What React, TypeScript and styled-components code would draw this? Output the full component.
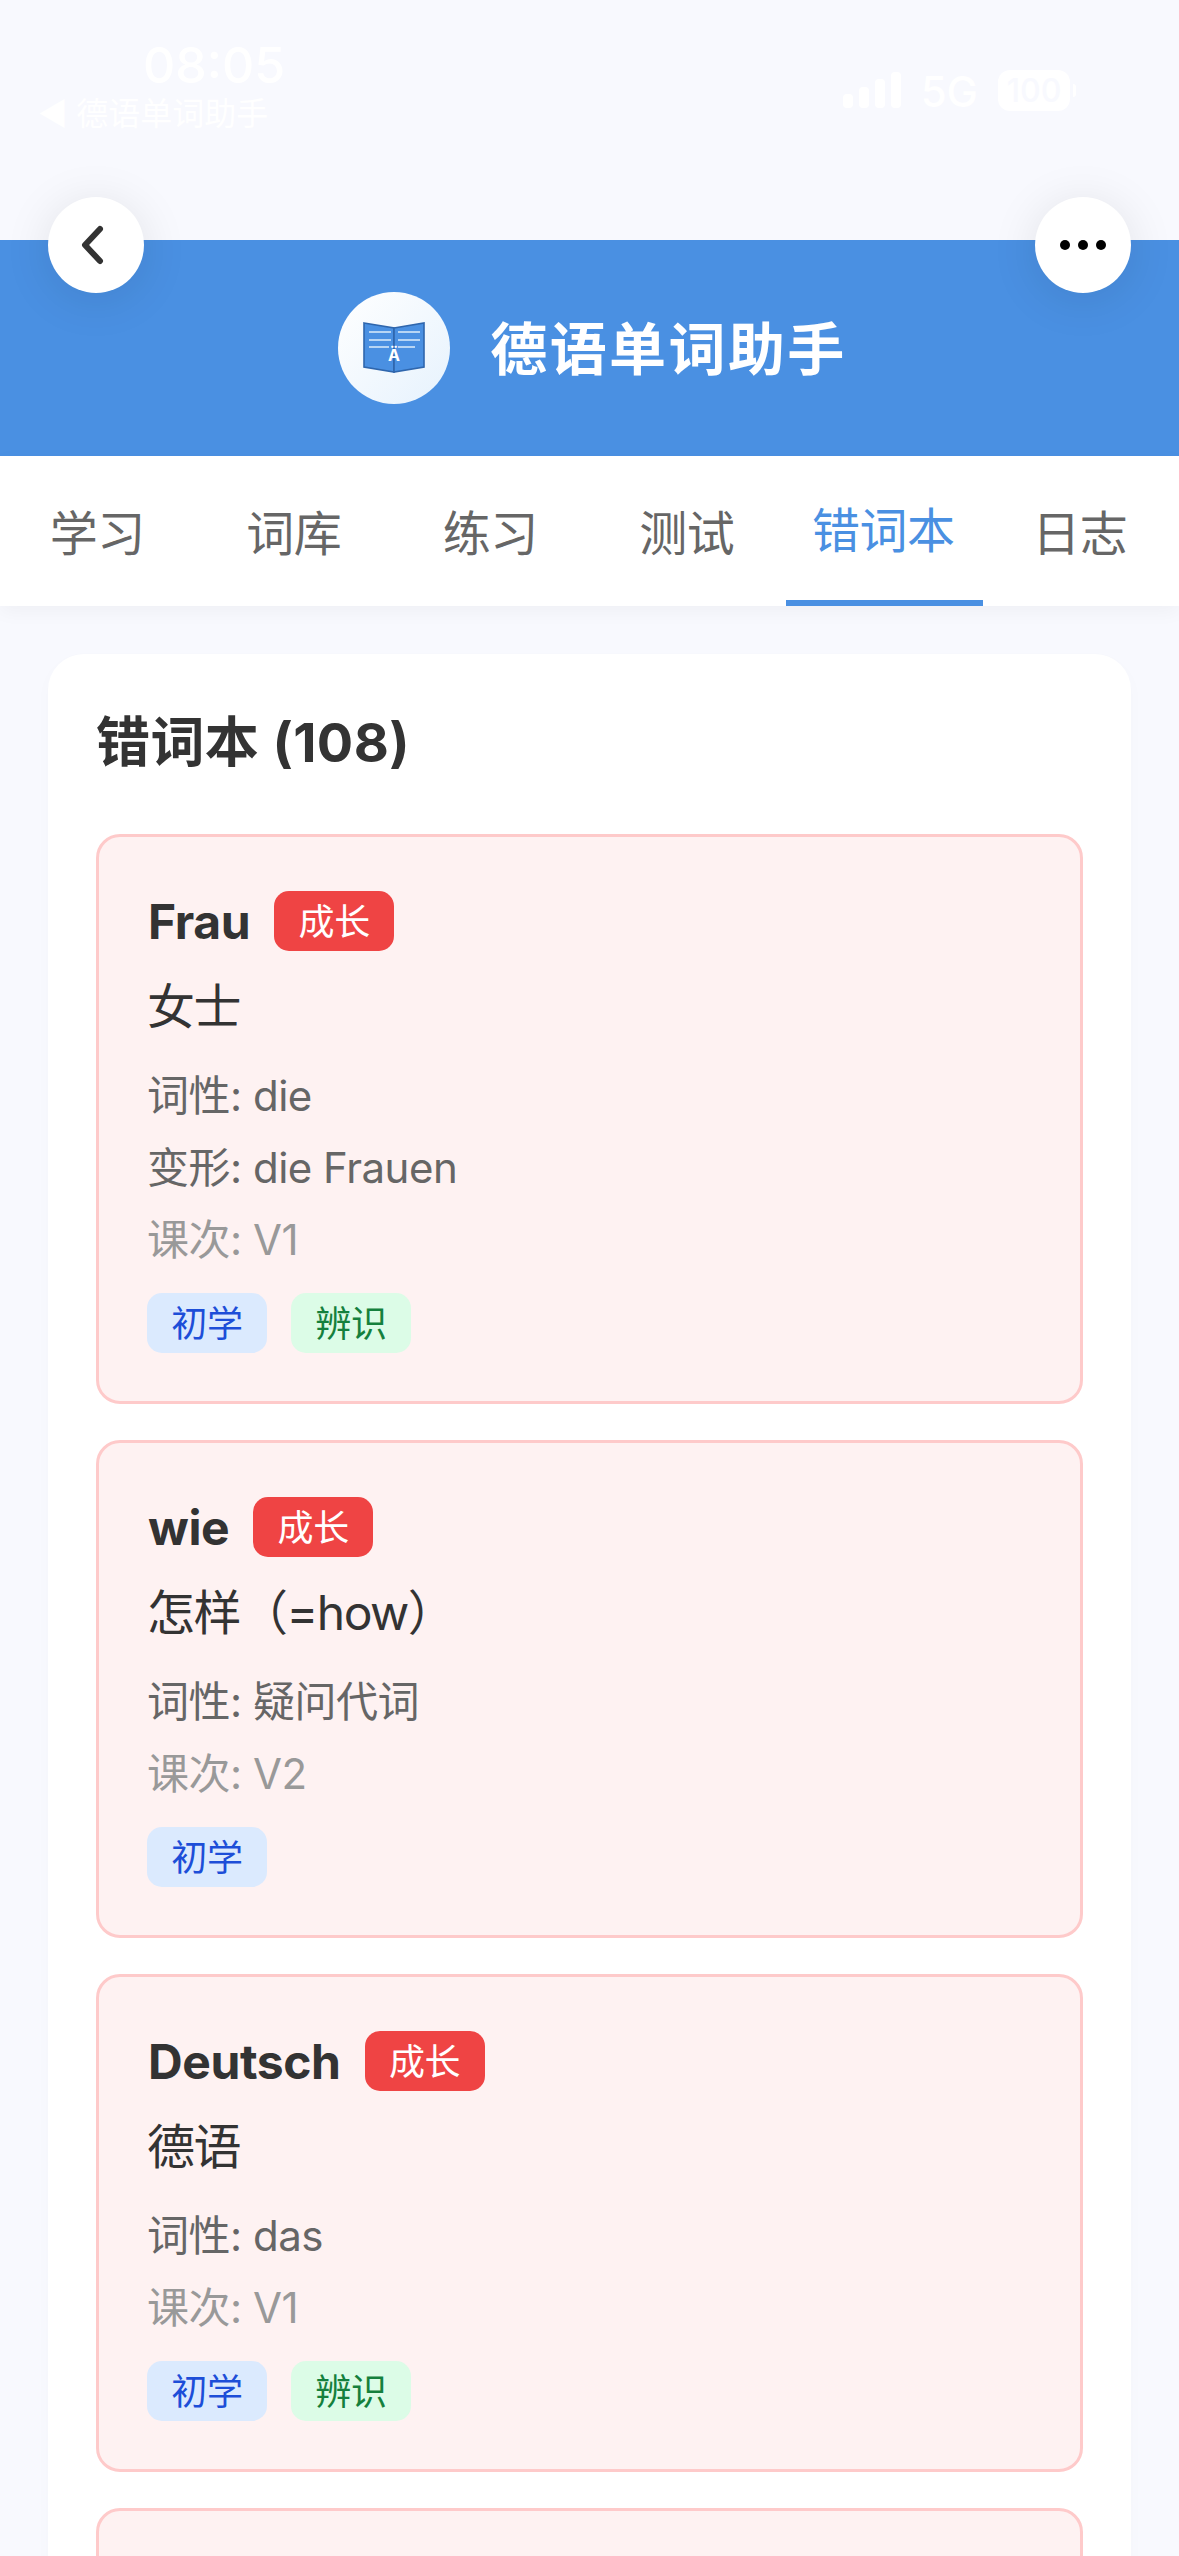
import styled, { createGlobalStyle } from "styled-components";

const GlobalStyle = createGlobalStyle`
  * {
    box-sizing: border-box;
  }
  html,
  body {
    margin: 0;
    height: 2556px;
    overflow: hidden;
    background: #f8f9fe;
  }
  body {
    font-family: Inter, "Noto Sans CJK SC", sans-serif;
  }
`;

type Word = {
  word: string;
  meaning: string;
  pos: string;
  forms?: string;
  lesson: string;
  tags: string[];
};

const WORDS: Word[] = [
  { word: "Frau", meaning: "女士", pos: "die", forms: "die Frauen", lesson: "V1", tags: ["初学", "辨识"] },
  { word: "wie", meaning: "怎样（=how）", pos: "疑问代词", lesson: "V2", tags: ["初学"] },
  { word: "Deutsch", meaning: "德语", pos: "das", lesson: "V1", tags: ["初学", "辨识"] },
];

const TABS = ["学习", "词库", "练习", "测试", "错词本", "日志"];

const Page = styled.div`
  width: 1179px;
  height: 2556px;
  overflow: hidden;
  position: relative;
`;

const StatusBar = styled.div`
  height: 240px;
  padding: 36px 48px 0 38px;
  display: flex;
  justify-content: space-between;
  align-items: flex-start;
  color: #fff;
`;

const StatusLeft = styled.div`
  display: flex;
  flex-direction: column;
`;

const Time = styled.div`
  font-size: 50px;
  line-height: 58px;
  font-weight: 500;
  margin-left: 105px;
`;

const BackApp = styled.div`
  font-size: 32px;
  line-height: 40px;
`;

const StatusRight = styled.div`
  display: flex;
  align-items: center;
  gap: 20px;
  margin-top: 30px;
  margin-right: 61px;
  font-size: 42px;
  line-height: 44px;
  font-weight: 500;
`;

const NetworkLabel = styled.span`
  margin-top: 4px;
`;

const Battery = styled.span`
  width: 72px;
  height: 41px;
  border-radius: 12px;
  background: #fff;
  color: #f8f9fe;
  font-size: 32px;
  line-height: 41px;
  text-align: center;
  position: relative;

  &::after {
    content: "";
    position: absolute;
    left: 75px;
    top: 14px;
    width: 3px;
    height: 13px;
    border-radius: 0 3px 3px 0;
    background: #fff;
  }
`;

const Header = styled.header`
  height: 216px;
  padding-left: 6px;
  background: #4a90e2;
  display: flex;
  align-items: center;
  justify-content: center;
  gap: 40px;
`;

const Logo = styled.div`
  width: 112px;
  height: 112px;
  border-radius: 50%;
  background: linear-gradient(135deg, #ffffff, #e6f2fd);
  display: flex;
  align-items: center;
  justify-content: center;
`;

const Title = styled.h1`
  margin: 3px 0 0;
  color: #fff;
  font-size: 57px;
  line-height: 80px;
  font-weight: 700;
  letter-spacing: 2.4px;
`;

const RoundButton = styled.button<{ $side: "left" | "right" }>`
  position: absolute;
  top: 197px;
  ${(p) => p.$side}: 48px;
  width: 96px;
  height: 96px;
  padding: 0;
  border: 0;
  border-radius: 50%;
  background: #fff;
  box-shadow: 0 6px 48px rgba(0, 0, 0, 0.1);
  display: flex;
  align-items: center;
  justify-content: center;
`;

const TabBar = styled.nav`
  height: 150px;
  background: #fff;
  display: flex;
  box-shadow: 0 6px 18px rgba(0, 0, 0, 0.04);
  position: relative;
`;

const Tab = styled.div<{ $active?: boolean }>`
  flex: 1;
  display: flex;
  align-items: center;
  justify-content: center;
  padding: 0 2px 3px 0;
  font-size: 48px;
  letter-spacing: -0.5px;
  color: ${(p) => (p.$active ? "#4a90e2" : "#666")};
  border-bottom: ${(p) => (p.$active ? "6px solid #4a90e2" : "0")};
`;

const Main = styled.main`
  padding: 48px 48px 0;
`;

const Panel = styled.section`
  background: #fff;
  border-radius: 36px;
  padding: 48px;
  box-shadow: 0 6px 18px rgba(0, 0, 0, 0.02);
`;

const PanelTitle = styled.h2`
  margin: 0 0 51px;
  font-size: 54px;
  line-height: 81px;
  font-weight: 700;
  letter-spacing: 0.4px;
  color: #333;
`;

const CardList = styled.div`
  display: flex;
  flex-direction: column;
  gap: 36px;
`;

const Card = styled.article`
  min-height: 300px;
  padding: 48px;
  border: 3px solid #fecaca;
  border-radius: 24px;
  background: #fef2f2;
`;

const WordRow = styled.div`
  display: flex;
  align-items: center;
  gap: 24px;
  height: 72px;
  margin-bottom: 14px;
`;

const WordText = styled.span`
  font-size: 48px;
  font-weight: 700;
  letter-spacing: -0.4px;
  margin-left: 1px;
  color: #333;
`;

const Pill = styled.span<{ $bg: string; $fg: string }>`
  width: 120px;
  height: 60px;
  padding-bottom: 4px;
  border-radius: 15px;
  display: flex;
  align-items: center;
  justify-content: center;
  font-size: 36px;
  letter-spacing: -0.3px;
  background: ${(p) => p.$bg};
  color: ${(p) => p.$fg};
`;

const Meaning = styled.div`
  font-size: 48px;
  line-height: 72px;
  letter-spacing: -1.5px;
  color: #333;
  margin-bottom: 21px;
`;

const Detail = styled.div<{ $muted?: boolean }>`
  font-size: 42px;
  line-height: 63px;
  letter-spacing: -0.5px;
  margin-bottom: 9px;
  color: ${(p) => (p.$muted ? "#999" : "#666")};
`;

const Tags = styled.div`
  display: flex;
  gap: 24px;
  margin-top: 22px;
`;

const tagColors: Record<string, { bg: string; fg: string }> = {
  初学: { bg: "#dbeafe", fg: "#1d4ed8" },
  辨识: { bg: "#dcfce7", fg: "#15803d" },
};

const BookIcon = () => (
  <svg width="62" height="52" viewBox="0 0 62 52">
    <path d="M1 1 L31 6 L31 50 L1 45 Z" fill="#4a90e2" stroke="#2f66ad" strokeWidth="1.6" />
    <path d="M31 6 L61 1 L61 45 L31 50 Z" fill="#4a90e2" stroke="#2f66ad" strokeWidth="1.6" />
    <g stroke="#dcebfa" strokeWidth="1.6">
      <path d="M6 10 H28 M6 18 H28 M6 25 H26" />
      <path d="M35 10 H57 M35 18 H57 M35 25 H52" />
    </g>
    <text x="31" y="39" textAnchor="middle" fontSize="16" fontWeight="700" fill="#fff" fontFamily="Inter, sans-serif">
      Ä
    </text>
  </svg>
);

const SignalIcon = () => (
  <svg width="58" height="36" viewBox="0 0 58 36" fill="#fff">
    <rect x="0" y="22" width="10" height="14" rx="4" />
    <rect x="16" y="15" width="10" height="21" rx="4" />
    <rect x="32" y="7" width="10" height="29" rx="4" />
    <rect x="48" y="0" width="10" height="36" rx="4" />
  </svg>
);

const BackIcon = () => (
  <svg width="30" height="42" viewBox="0 0 30 42" fill="none">
    <path d="M19 5 L4 21 L19 37" stroke="#333" strokeWidth="6" strokeLinecap="round" strokeLinejoin="round" />
  </svg>
);

const MoreIcon = () => (
  <svg width="46" height="10" viewBox="0 0 46 10" fill="#000">
    <circle cx="5" cy="5" r="5" />
    <circle cx="23" cy="5" r="5" />
    <circle cx="41" cy="5" r="5" />
  </svg>
);

const App = () => {
  return (
    <Page>
      <GlobalStyle />
      <StatusBar>
        <StatusLeft>
          <Time>08:05</Time>
          <BackApp>◀ 德语单词助手</BackApp>
        </StatusLeft>
        <StatusRight>
          <SignalIcon />
          <NetworkLabel>5G</NetworkLabel>
          <Battery>100</Battery>
        </StatusRight>
      </StatusBar>
      <Header>
        <Logo>
          <BookIcon />
        </Logo>
        <Title>德语单词助手</Title>
      </Header>
      <RoundButton $side="left" aria-label="back">
        <BackIcon />
      </RoundButton>
      <RoundButton $side="right" aria-label="more">
        <MoreIcon />
      </RoundButton>
      <TabBar>
        {TABS.map((t) => (
          <Tab key={t} $active={t === "错词本"}>
            {t}
          </Tab>
        ))}
      </TabBar>
      <Main>
        <Panel>
          <PanelTitle>错词本 (108)</PanelTitle>
          <CardList>
            {WORDS.map((w) => (
              <Card key={w.word}>
                <WordRow>
                  <WordText>{w.word}</WordText>
                  <Pill $bg="#ef4444" $fg="#fff">
                    成长
                  </Pill>
                </WordRow>
                <Meaning>{w.meaning}</Meaning>
                <Detail>词性: {w.pos}</Detail>
                {w.forms && <Detail>变形: {w.forms}</Detail>}
                <Detail $muted>课次: {w.lesson}</Detail>
                <Tags>
                  {w.tags.map((t) => (
                    <Pill key={t} $bg={tagColors[t].bg} $fg={tagColors[t].fg}>
                      {t}
                    </Pill>
                  ))}
                </Tags>
              </Card>
            ))}
            <Card />
          </CardList>
        </Panel>
      </Main>
    </Page>
  );
};

export default App;
